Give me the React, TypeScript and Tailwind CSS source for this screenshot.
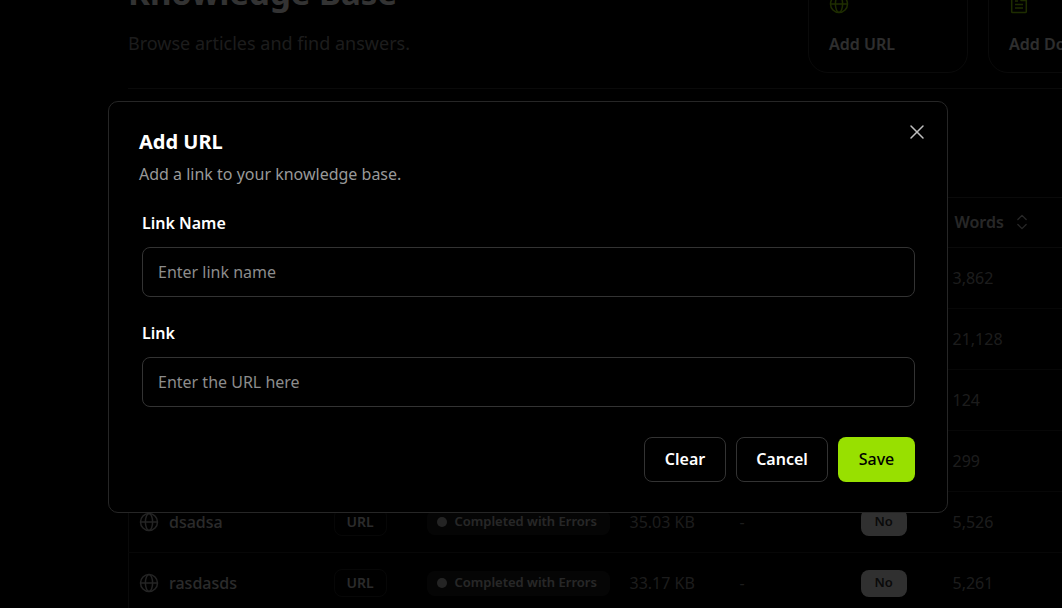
import React from "react";
import { ChevronsUpDown, X } from "lucide-react";

type Row = {
  name?: string;
  size?: string;
  words: string;
};

const rows: Row[] = [
  { words: "3,862" },
  { words: "21,128" },
  { words: "124" },
  { words: "299" },
  { name: "dsadsa", size: "35.03 KB", words: "5,526" },
  { name: "rasdasds", size: "33.17 KB", words: "5,261" },
];

function GlobeIcon({ className }: { className: string }) {
  return (
    <svg viewBox="0 0 20 20" fill="none" stroke="currentColor" strokeWidth="1.5" className={className} aria-hidden="true">
      <circle cx="10" cy="10" r="8.5" />
      <ellipse cx="10" cy="10" rx="3.6" ry="8.5" />
      <path d="M1.5 10h17" />
    </svg>
  );
}

function DocumentIcon({ className }: { className: string }) {
  return (
    <svg viewBox="0 0 20 20" fill="none" stroke="currentColor" strokeWidth="1.5" strokeLinejoin="round" className={className} aria-hidden="true">
      <path d="M12.5 1.5h-9a.8.8 0 0 0-.8.8v15.4a.8.8 0 0 0 .8.8h13a.8.8 0 0 0 .8-.8V6.2z" />
      <path d="M12 1.5v5h5M6 7h3M6 10.5h8M6 14h8" />
    </svg>
  );
}

function ActionCard({ label, icon }: { label: string; icon: React.ReactNode }) {
  return (
    <button type="button" className="flex h-40 w-40 flex-col items-start justify-end gap-4.5 rounded-[20px] border border-[#333333] px-5 pb-4 text-left text-base font-semibold text-[#e5e5e5]">
      {icon}
      <span className="whitespace-nowrap">{label}</span>
    </button>
  );
}

function SourceRow({ row }: { row: Row }) {
  return (
    <tr className="h-[61px] border-b border-[#262626]">
      <td className="px-2.5">
        {row.name && (
          <div className="flex items-center gap-2.5 font-medium text-[#d4d4d4]">
            <GlobeIcon className="size-5 text-[#b3b3b3]" />
            {row.name}
          </div>
        )}
      </td>
      <td className="px-2.5">
        {row.name && (
          <span className="inline-flex h-7 items-center rounded-lg border border-[#262626] px-3 text-sm font-semibold text-[#d4d4d4]">URL</span>
        )}
      </td>
      <td className="px-2.5">
        {row.name && (
          <span className="flex h-[25px] items-center gap-2 rounded-lg bg-[#1c1c1c] px-2.5 text-[13px] font-semibold whitespace-nowrap text-[#c4c4c4]">
            <span className="size-2.5 shrink-0 rounded-full bg-[#b3b3b3]" />
            Completed with Errors
          </span>
        )}
      </td>
      <td className="px-2.5">{row.size}</td>
      <td className="px-2.5">{row.name && "-"}</td>
      <td className="px-2.5">
        {row.name && (
          <span className="inline-flex h-[27px] items-center rounded-lg bg-[#f0f0f0] px-3.5 text-[13px] font-semibold text-[#333333]">No</span>
        )}
      </td>
      <td className="px-2.5">{row.words}</td>
    </tr>
  );
}

function KnowledgeBase() {
  return (
    <main className="-mt-[87px] min-w-[1148px] pl-32">
      <header className="flex items-end justify-between border-b border-[#333333] pb-[15px]">
        <div className="pb-4">
          <h1 className="text-[33px] leading-10 font-bold text-white">Knowledge Base</h1>
          <p className="mt-4 text-lg text-[#8c8c8c]">Browse articles and find answers.</p>
        </div>
        <div className="flex gap-5">
          <ActionCard label="Add URL" icon={<GlobeIcon className="size-5 text-[#98e000]" />} />
          <ActionCard label="Add Document" icon={<DocumentIcon className="size-5 text-[#98e000]" />} />
        </div>
      </header>
      <table className="mt-[108px] w-full table-fixed border-collapse border border-[#333333] text-left text-base text-[#8c8c8c]">
        <colgroup>
          <col className="w-[195px]" />
          <col className="w-[93px]" />
          <col className="w-[203px]" />
          <col className="w-[110px]" />
          <col className="w-[121px]" />
          <col className="w-[92px]" />
          <col />
        </colgroup>
        <thead>
          <tr className="h-[50px] border-b border-[#333333]">
            <td colSpan={6} />
            <th scope="col" className="px-3 pb-0.5 font-semibold text-[#c4c4c4]">
              <span className="flex items-center gap-2">
                Words
                <ChevronsUpDown className="size-5" strokeWidth={1.5} />
              </span>
            </th>
          </tr>
        </thead>
        <tbody>
          {rows.map((row) => (
            <SourceRow key={row.words} row={row} />
          ))}
        </tbody>
      </table>
    </main>
  );
}

function Field({ id, label, placeholder }: { id: string; label: string; placeholder: string }) {
  return (
    <div className="flex flex-col gap-3">
      <label htmlFor={id} className="text-base font-semibold text-white">{label}</label>
      <input id={id} type="text" placeholder={placeholder} className="h-[50px] w-full rounded-lg border border-[#333333] bg-black px-[15px] text-base text-white outline-none placeholder:text-[#8c8c8c]" />
    </div>
  );
}

function AddUrlDialog() {
  return (
    <div className="fixed inset-0 flex items-center justify-center bg-black/80 pt-1.5 pr-1.5">
      <div role="dialog" aria-modal="true" aria-labelledby="dialog-title" className="relative w-full max-w-[840px] rounded-[10px] border border-[#262626] bg-black px-[30px] pt-6 pb-[30px]">
        <h2 id="dialog-title" className="text-xl leading-8 font-bold text-white">Add URL</h2>
        <p className="text-base leading-8 text-[#999999]">Add a link to your knowledge base.</p>
        <button type="button" aria-label="Close" className="absolute top-[18px] right-[18px] text-[#bfbfbf]">
          <X className="size-6" strokeWidth={1.5} />
        </button>
        <form className="mt-[21px] flex flex-col gap-6 pr-0.5 pl-[3px]" onSubmit={(event) => event.preventDefault()}>
          <Field id="link-name" label="Link Name" placeholder="Enter link name" />
          <Field id="link" label="Link" placeholder="Enter the URL here" />
          <div className="mt-1.5 flex justify-end gap-2.5 text-base font-semibold">
            <button type="reset" className="h-[45px] w-[82px] rounded-lg border border-[#333333] pb-0.5 text-white">Clear</button>
            <button type="button" className="h-[45px] w-[92px] rounded-lg border border-[#333333] pb-0.5 text-white">Cancel</button>
            <button type="submit" className="h-[45px] w-[77px] rounded-lg bg-[#98e000] pb-0.5 font-medium text-black">Save</button>
          </div>
        </form>
      </div>
    </div>
  );
}

export default function App() {
  return (
    <div className="flow-root h-screen overflow-hidden bg-black font-['Noto_Sans',sans-serif]">
      <KnowledgeBase />
      <AddUrlDialog />
    </div>
  );
}
